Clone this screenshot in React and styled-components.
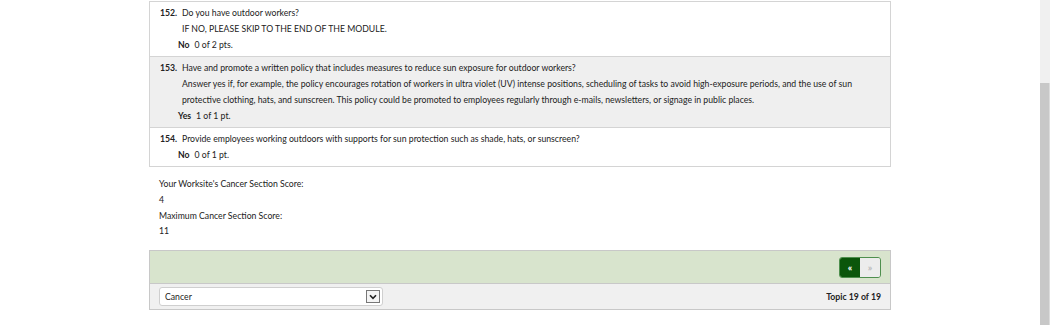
import React from "react";
import styled, { createGlobalStyle } from "styled-components";

const Global = createGlobalStyle`
  html, body { margin: 0; padding: 0; background: #fff; }
  body { font-family: Lato, "Open Sans", Arial, sans-serif; color: #222; font-size: 8.7px; }
`;

const Screen = styled.div`
  display: flex;
  width: 1050px;
  height: 325px;
  overflow: hidden;
`;

const Main = styled.div`
  flex: 1;
  display: flex;
  justify-content: center;
`;

const Scrollbar = styled.div`
  width: 10px;
  display: flex;
  flex-direction: column;
  background: #f0f0f0;
`;

const Thumb = styled.div`
  margin-top: 83px;
  flex: 1;
  background: #c8c8c8;
  border-right: 1px solid #dcdcdc;
`;

const Column = styled.div`
  width: 742px;
  padding-top: 1px;
`;

const List = styled.div`
  border: 1px solid #d4d4d4;
  border-bottom: none;
`;

const Row = styled.div`
  background: ${(p) => (p.$shaded ? "#efefef" : "#fff")};
  border-bottom: 1px solid #d4d4d4;
  padding: 3px 10px;
  line-height: 16px;
`;

const QLine = styled.div`
  display: flex;
`;

const Num = styled.span`
  width: 22px;
  font-weight: 700;
  flex: none;
`;

const Sub = styled.div`
  padding-left: 22px;
`;

const Answer = styled.div`
  padding-left: 18px;
`;

const Bold = styled.b`
  font-weight: 700;
  margin-right: 5px;
`;

const Score = styled.div`
  padding: 9px 10px 11px;
  line-height: 15.8px;
`;

const NavBar = styled.div`
  height: 32px;
  background: #d8e4cd;
  border: 1px solid #c8c8c8;
  display: flex;
  align-items: center;
  justify-content: flex-end;
  padding: 0 9px;
`;

const BtnGroup = styled.div`
  display: flex;
  border: 1px solid #4e8f4e;
  border-radius: 3px;
  overflow: hidden;
  height: 19px;
`;

const Btn = styled.div`
  width: 20px;
  display: flex;
  align-items: center;
  justify-content: center;
  font-size: 10px;
  font-weight: 700;
  background: ${(p) => (p.$active ? "#0b560b" : "#ececec")};
  color: ${(p) => (p.$active ? "#fff" : "#bbb")};
`;

const Footer = styled.div`
  height: 25px;
  background: #f0f0f0;
  border: 1px solid #c8c8c8;
  border-top: none;
  display: flex;
  align-items: center;
  justify-content: space-between;
  padding: 0 9px;
`;

const Select = styled.div`
  width: 224px;
  height: 19px;
  box-sizing: border-box;
  background: #fff;
  border: 1px solid #cfcfcf;
  border-radius: 3px;
  display: flex;
  align-items: center;
  justify-content: space-between;
  padding: 0 2px 0 5px;
`;

const Arrow = styled.div`
  width: 12px;
  height: 11px;
  border: 1px solid #777;
  background: #f4f4f4;
  display: flex;
  align-items: center;
  justify-content: center;
`;

const Topic = styled.span`
  font-weight: 700;
`;

export default function App() {
  return (
    <Screen>
      <Global />
      <Main>
        <Column>
          <List>
            <Row>
              <QLine><Num>152.</Num><span>Do you have outdoor workers?</span></QLine>
              <Sub>IF NO, PLEASE SKIP TO THE END OF THE MODULE.</Sub>
              <Answer><Bold>No</Bold>0 of 2 pts.</Answer>
            </Row>
            <Row $shaded>
              <QLine><Num>153.</Num><span>Have and promote a written policy that includes measures to reduce sun exposure for outdoor workers?</span></QLine>
              <Sub>
                Answer yes if, for example, the policy encourages rotation of workers in ultra violet (UV) intense positions, scheduling of tasks to avoid high-exposure periods, and the use of sun
                <br />
                protective clothing, hats, and sunscreen. This policy could be promoted to employees regularly through e-mails, newsletters, or signage in public places.
              </Sub>
              <Answer><Bold>Yes</Bold>1 of 1 pt.</Answer>
            </Row>
            <Row>
              <QLine><Num>154.</Num><span>Provide employees working outdoors with supports for sun protection such as shade, hats, or sunscreen?</span></QLine>
              <Answer><Bold>No</Bold>0 of 1 pt.</Answer>
            </Row>
          </List>
          <Score>
            <div>Your Worksite's Cancer Section Score:</div>
            <div>4</div>
            <div>Maximum Cancer Section Score:</div>
            <div>11</div>
          </Score>
          <NavBar>
            <BtnGroup>
              <Btn $active>«</Btn>
              <Btn>»</Btn>
            </BtnGroup>
          </NavBar>
          <Footer>
            <Select>
              <span>Cancer</span>
              <Arrow>
                <svg width="8" height="6" viewBox="0 0 8 6">
                  <path d="M1 1.2 L4 4.4 L7 1.2" fill="none" stroke="#222" strokeWidth="1.6" />
                </svg>
              </Arrow>
            </Select>
            <Topic>Topic 19 of 19</Topic>
          </Footer>
        </Column>
      </Main>
      <Scrollbar>
        <Thumb />
      </Scrollbar>
    </Screen>
  );
}
